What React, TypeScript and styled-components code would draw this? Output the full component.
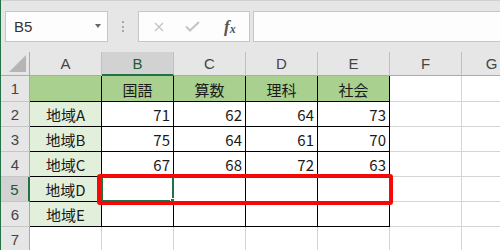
import React from "react";
import styled, { createGlobalStyle } from "styled-components";

const GlobalStyle = createGlobalStyle`
  html, body {
    margin: 0;
    padding: 0;
    background: #ffffff;
    overflow: hidden;
  }
  body {
    font-family: "Noto Sans CJK JP", "Liberation Sans", sans-serif;
  }
`;

const GREEN = "#217346";
const BLACK = "#000000";
const GRID = "#d4d4d4";

type LineKind = "table" | "grid";

interface CellProps {
  $bg?: string;
  $line?: LineKind;
  $bottom?: LineKind;
  $align?: "left" | "center" | "right";
}

const cols = ["A", "B", "C", "D", "E", "F", "G"];

const data: (string | number)[][] = [
  ["", "国語", "算数", "理科", "社会"],
  ["地域A", 71, 62, 64, 73],
  ["地域B", 75, 64, 61, 70],
  ["地域C", 67, 68, 72, 63],
  ["地域D", "", "", "", ""],
  ["地域E", "", "", "", ""],
  ["", "", "", "", ""],
];

const ACTIVE_COL = 1; // B
const ACTIVE_ROW = 5;

const App: React.FC = () => {
  return (
    <>
      <GlobalStyle />
      <Window>
        <FormulaBar>
          <NameBox>
            <span>B5</span>
            <DropArrow />
          </NameBox>
          <Grip>
            <i />
            <i />
            <i />
          </Grip>
          <FxButtons>
            <svg width="10" height="10" viewBox="0 0 10 10">
              <path
                d="M1 1 L9 9 M9 1 L1 9"
                stroke="#c4c4c4"
                strokeWidth="1.4"
                fill="none"
              />
            </svg>
            <svg width="15" height="11" viewBox="0 0 15 11">
              <path
                d="M1 5.5 L5 9.5 L14 1"
                stroke="#c4c4c4"
                strokeWidth="2"
                fill="none"
              />
            </svg>
            <FxLabel>
              f<sub>x</sub>
            </FxLabel>
          </FxButtons>
          <FormulaInput />
        </FormulaBar>

        <Sheet>
          <Corner>
            <svg width="18" height="18" viewBox="0 0 18 18">
              <path d="M17 0 L17 17 L0 17 Z" fill="#b5b5b5" />
            </svg>
          </Corner>
          {cols.map((c, i) => (
            <ColHead key={c} $active={i === ACTIVE_COL}>
              {c}
            </ColHead>
          ))}

          {data.map((row, r) => {
            const rowNo = r + 1;
            const inTable = rowNo <= 6;
            return (
              <React.Fragment key={rowNo}>
                <RowHead $active={rowNo === ACTIVE_ROW}>{rowNo}</RowHead>
                {cols.map((c, ci) => {
                  const value = ci < 5 ? row[ci] : "";
                  const tableCell = inTable && ci < 5;
                  let bg: string | undefined;
                  if (tableCell && rowNo === 1) bg = "#a9d08e";
                  else if (tableCell && ci === 0) bg = "#e2efda";
                  const isNum = typeof value === "number";
                  return (
                    <Cell
                      key={c}
                      $bg={bg}
                      $line={tableCell ? "table" : "grid"}
                      $bottom={tableCell ? "table" : "grid"}
                      $align={isNum ? "right" : "center"}
                    >
                      {value}
                      {rowNo === ACTIVE_ROW && ci === ACTIVE_COL && (
                        <Selection>
                          <FillHandle />
                        </Selection>
                      )}
                    </Cell>
                  );
                })}
              </React.Fragment>
            );
          })}

          <Highlight />
        </Sheet>
      </Window>
    </>
  );
};

const Window = styled.div`
  width: 500px;
  height: 250px;
  box-sizing: border-box;
  border-left: 1px solid ${GREEN};
  background: #e6e6e6;
  overflow: hidden;
  display: flex;
  flex-direction: column;
`;

const FormulaBar = styled.div`
  height: 52px;
  flex: none;
  box-sizing: border-box;
  border-top: 1px solid #d0d0d0;
  padding: 10px 0 0 4px;
  display: flex;
  align-items: flex-start;
`;

const boxBase = `
  height: 31px;
  box-sizing: border-box;
  border: 1px solid #c6c6c6;
  background: #fdfdfd;
`;

const NameBox = styled.div`
  ${boxBase}
  width: 103px;
  flex: none;
  display: flex;
  align-items: center;
  justify-content: space-between;
  padding: 0 6px 0 8px;
  font-family: "Liberation Sans", sans-serif;
  font-size: 15px;
  color: #333;
`;

const DropArrow = styled.span`
  width: 0;
  height: 0;
  border-left: 3.5px solid transparent;
  border-right: 3.5px solid transparent;
  border-top: 4px solid #666;
  margin-top: -2px;
`;

const Grip = styled.div`
  width: 30px;
  height: 31px;
  flex: none;
  display: flex;
  flex-direction: column;
  align-items: center;
  justify-content: center;
  gap: 2.5px;

  i {
    display: block;
    width: 2px;
    height: 2px;
    background: #a8a8a8;
  }
`;

const FxButtons = styled.div`
  ${boxBase}
  width: 112px;
  flex: none;
  display: flex;
  align-items: center;
  padding-left: 15px;
  gap: 21px;

  svg {
    display: block;
  }
`;

const FxLabel = styled.span`
  font-family: "Liberation Serif", serif;
  font-style: italic;
  font-weight: bold;
  font-size: 17px;
  color: #555;
  margin-left: 3px;
  line-height: 1;

  sub {
    font-size: 12px;
    vertical-align: baseline;
    position: relative;
    top: 1px;
  }
`;

const FormulaInput = styled.div`
  ${boxBase}
  flex: 1;
  margin-left: 3px;
  margin-right: -10px;
`;

const Sheet = styled.div`
  position: relative;
  flex: 1;
  display: grid;
  grid-template-columns: 29px repeat(6, 72px) 60px;
  grid-template-rows: 24px 26px repeat(6, 25px);
  background: #ffffff;
  font-size: 15px;
  color: #1a1a1a;
`;

const headBase = `
  box-sizing: border-box;
  background: #e6e6e6;
  display: flex;
  align-items: center;
  justify-content: center;
  color: #444;
  font-family: "Liberation Sans", "Noto Sans CJK JP", sans-serif;
  font-size: 15px;
`;

const Corner = styled.div`
  ${headBase}
  border-right: 1px solid #ababab;
  border-bottom: 1px solid #ababab;
  align-items: flex-end;
  justify-content: flex-end;
  padding: 0 2px 2px 0;

  svg {
    display: block;
  }
`;

const ColHead = styled.div<{ $active?: boolean }>`
  ${headBase}
  border-right: 1px solid #c0c0c0;
  border-bottom: ${(p) => (p.$active ? `2px solid ${GREEN}` : "1px solid #ababab")};
  background: ${(p) => (p.$active ? "#d2d2d2" : "#e6e6e6")};
  color: ${(p) => (p.$active ? "#1c5a34" : "#444")};
  padding-top: ${(p) => (p.$active ? "1px" : "0")};
`;

const RowHead = styled.div<{ $active?: boolean }>`
  ${headBase}
  border-right: ${(p) => (p.$active ? `2px solid ${GREEN}` : "1px solid #ababab")};
  border-bottom: 1px solid #c6c6c6;
  background: ${(p) => (p.$active ? "#d2d2d2" : "#e6e6e6")};
  color: ${(p) => (p.$active ? "#1c5a34" : "#444")};
`;

const Cell = styled.div<CellProps>`
  position: relative;
  box-sizing: border-box;
  background: ${(p) => p.$bg ?? "#ffffff"};
  border-right: 1px solid ${(p) => (p.$line === "table" ? BLACK : GRID)};
  border-bottom: 1px solid ${(p) => (p.$bottom === "table" ? BLACK : GRID)};
  display: flex;
  align-items: center;
  justify-content: ${(p) =>
    p.$align === "right" ? "flex-end" : p.$align === "left" ? "flex-start" : "center"};
  padding: 1px 3px 0 3px;
  font-family: "Noto Sans CJK JP", sans-serif;
  line-height: 1;
  white-space: nowrap;
`;

const Selection = styled.div`
  position: absolute;
  left: -1px;
  top: -1px;
  right: -1px;
  bottom: -1px;
  border: 2px solid ${GREEN};
  pointer-events: none;
`;

const FillHandle = styled.div`
  position: absolute;
  right: -4px;
  bottom: -4px;
  width: 5px;
  height: 5px;
  background: ${GREEN};
  border: 1px solid #ffffff;
  border-right: none;
  border-bottom: none;
`;

const Highlight = styled.div`
  position: absolute;
  left: 96px;
  top: 122px;
  width: 296px;
  height: 31px;
  box-sizing: border-box;
  border: 4px solid #f40808;
  border-radius: 3px;
  pointer-events: none;
`;

export default App;
